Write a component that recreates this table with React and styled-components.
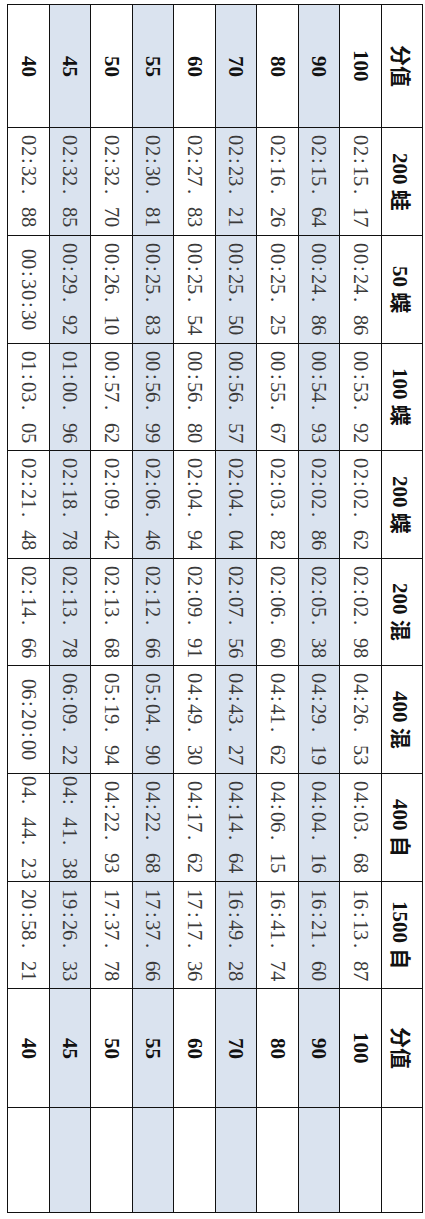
import styled, { createGlobalStyle } from "styled-components";

const GlobalStyle = createGlobalStyle`
  html, body {
    margin: 0;
    padding: 0;
    background: #fff;
  }
  body {
    font-family: "Liberation Serif", "Noto Sans CJK SC", serif;
  }
`;

const Page = styled.div`
  width: 425px;
  height: 1219px;
  padding: 4px 0 0 7px;
  box-sizing: border-box;
  overflow: hidden;
  background: #fff;
`;

const Table = styled.div`
  display: flex;
  flex-direction: row-reverse;
  width: 416px;
  border-left: 1px solid #111;
  border-bottom: 1px solid #111;
  box-sizing: border-box;
`;

const Column = styled.div`
  display: flex;
  flex-direction: column;
  width: 41.5px;
  background: ${p => (p.$shaded ? "#dae3ef" : "#fff")};
`;

const Cell = styled.div`
  box-sizing: border-box;
  height: ${p => p.$h}px;
  border-top: 1px solid #111;
  border-right: 1px solid #111;
  writing-mode: vertical-rl;
  text-orientation: sideways;
  display: flex;
  align-items: center;
  justify-content: center;
  white-space: nowrap;
  font-family: "Liberation Serif", "Noto Sans CJK SC", serif;
  font-size: ${p => (p.$bold ? "21px" : "20.5px")};
  font-weight: ${p => (p.$bold ? 700 : 400)};
  color: ${p => (p.$bold ? "#111" : "#3a3a3a")};
`;

const Ch = styled.span`
  display: inline-block;
  inline-size: 0.5em;
  text-align: center;
`;

const heights = [123, 108, 108, 107, 108, 107, 108, 108, 107, 119, 105];

const header = ["分值", "200 蛙", "50 蝶", "100 蝶", "200 蝶", "200 混", "400 混", "400 自", "1500 自", "分值", ""];

const rows = [
  ["100", "02:15. 17", "00:24. 86", "00:53. 92", "02:02. 62", "02:02. 98", "04:26. 53", "04:03. 68", "16:13. 87"],
  ["90", "02:15. 64", "00:24. 86", "00:54. 93", "02:02. 86", "02:05. 38", "04:29. 19", "04:04. 16", "16:21. 60"],
  ["80", "02:16. 26", "00:25. 25", "00:55. 67", "02:03. 82", "02:06. 60", "04:41. 62", "04:06. 15", "16:41. 74"],
  ["70", "02:23. 21", "00:25. 50", "00:56. 57", "02:04. 04", "02:07. 56", "04:43. 27", "04:14. 64", "16:49. 28"],
  ["60", "02:27. 83", "00:25. 54", "00:56. 80", "02:04. 94", "02:09. 91", "04:49. 30", "04:17. 62", "17:17. 36"],
  ["55", "02:30. 81", "00:25. 83", "00:56. 99", "02:06. 46", "02:12. 66", "05:04. 90", "04:22. 68", "17:37. 66"],
  ["50", "02:32. 70", "00:26. 10", "00:57. 62", "02:09. 42", "02:13. 68", "05:19. 94", "04:22. 93", "17:37. 78"],
  ["45", "02:32. 85", "00:29. 92", "01:00. 96", "02:18. 78", "02:13. 78", "06:09. 22", "04: 41. 38", "19:26. 33"],
  ["40", "02:32. 88", "00:30:30", "01:03. 05", "02:21. 48", "02:14. 66", "06:20:00", "04. 44. 23", "20:58. 21"],
];

const shaded = ["90", "70", "55", "45"];

// fixed-width digits like the SimSun numbers of the original sheet
function Mono({ text }) {
  return (
    <span>
      {text.split("").map((c, i) => <Ch key={i}>{c === " " ? "\u00a0" : c}</Ch>)}
    </span>
  );
}

export default function App() {
  return (
    <Page>
      <GlobalStyle />
      <Table>
        <Column>
          {header.map((h, i) => <Cell key={i} $h={heights[i]} $bold>{h}</Cell>)}
        </Column>
        {rows.map(row => (
          <Column key={row[0]} $shaded={shaded.includes(row[0])}>
            <Cell $h={heights[0]} $bold>{row[0]}</Cell>
            {row.slice(1).map((v, i) => (
              <Cell key={i} $h={heights[i + 1]}><Mono text={v} /></Cell>
            ))}
            <Cell $h={heights[9]} $bold>{row[0]}</Cell>
            <Cell $h={heights[10]} />
          </Column>
        ))}
      </Table>
    </Page>
  );
}
